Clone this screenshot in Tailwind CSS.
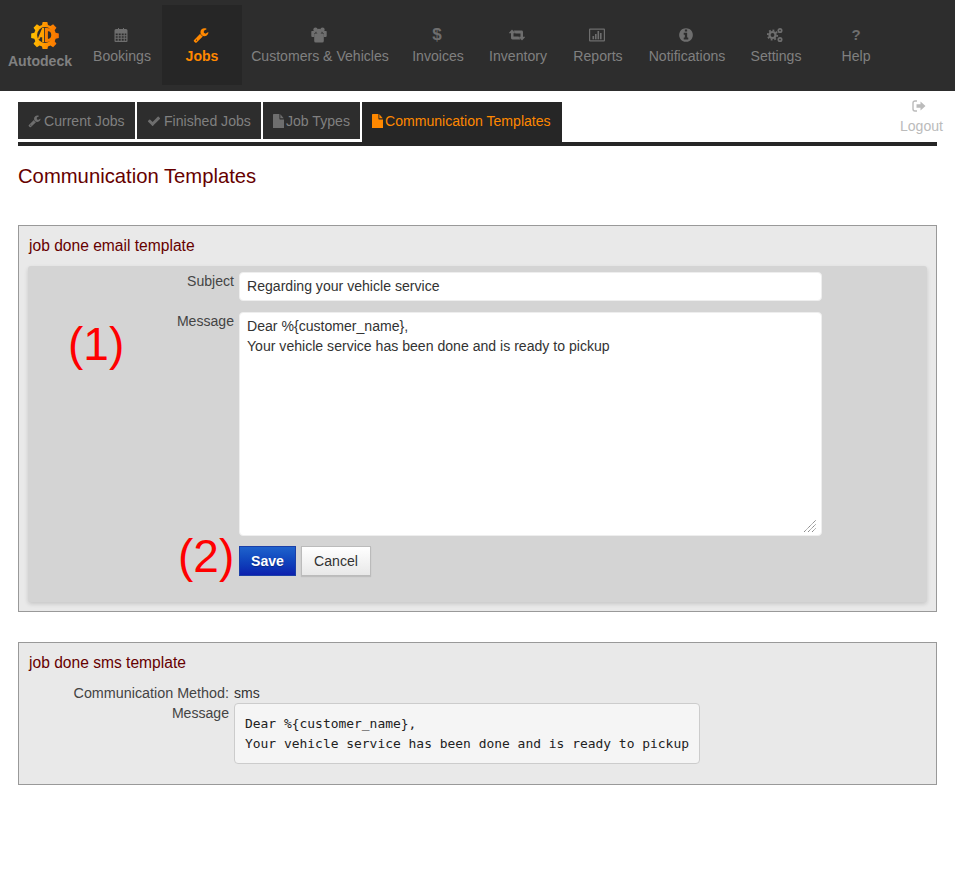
<!DOCTYPE html>
<html lang="en">
<head>
  <meta charset="UTF-8" />
  <meta name="viewport" content="width=device-width, initial-scale=1.0" />
  <title>Communication Templates - Autodeck</title>
  <script src="https://cdn.jsdelivr.net/npm/@tailwindcss/browser@4"></script>
</head>
<body class="bg-white min-h-screen font-['Liberation_Sans',Arial,sans-serif] text-[14.08px] leading-[20px] text-[#333]">

<!-- Main nav -->
<header class="h-[91px] bg-[#2d2d2d] pt-[5px] flex text-[#808080]">
  <a href="#" class="w-[80px] mr-[2px] flex flex-col items-center pt-[16px]">
    <svg width="28" height="28" viewBox="0 0 30 30" class="ml-[10px]">
      <defs>
        <linearGradient id="logoGrad" x1="0" y1="0" x2="1" y2="0">
          <stop offset="0" stop-color="#ffc400" />
          <stop offset="0.5" stop-color="#ff9500" />
          <stop offset="1" stop-color="#f97000" />
        </linearGradient>
      </defs>
      <path fill="url(#logoGrad)" d="M12.5 1h5l.7 3.4 2.6 1 2.9-1.900 3.600 3.600-1.900 2.900 1 2.600 3.400.7v5l-3.400.7-1 2.600 1.900 2.900-3.600 3.600-2.900-1.900-2.600 1-.7 3.400h-5l-.7-3.400-2.600-1-2.900 1.900-3.600-3.600 1.900-2.900-1-2.600-3.400-.7v-5l3.400-.7 1-2.600-1.900-2.900 3.600-3.600 2.900 1.900 2.600-1z" />
      <circle cx="15" cy="15" r="8.500" fill="#2d2d2d" />
      <path d="M7 19.500L12 7.500h2v15h-2v-5H10l-1 2z" fill="#ffa200" />
      <path d="M16.500 9h.8a6 6 0 0 1 0 12h-.8z" fill="#2d2d2d" stroke="#f98000" stroke-width="3.200" />
    </svg>
    <span class="mt-[2px] font-bold">Autodeck</span>
  </a>
  <nav class="flex">
    <a href="#" class="w-[80px] h-[80px] flex flex-col items-center pt-[22px]">
      <svg class="w-[16px] h-[16px] -ml-[3px]" viewBox="0 0 16 16" fill="#6e6e6e">
        <path d="M3 2h2V1h1v1h4V1h1v1h2a1.500 1.500 0 0 1 1.500 1.500V14a1 1 0 0 1-1 1h-11a1 1 0 0 1-1-1V3.500A1.500 1.500 0 0 1 3 2zm-.3 4.500v1.700h2v-1.700zm3 0v1.700h2v-1.700zm3 0v1.700h2v-1.700zm3 0v1.700h1.600v-1.700zm-9 2.700v1.600h2V9.200zm3 0v1.600h2V9.200zm3 0v1.600h2V9.200zm3 0v1.600h1.600V9.200zm-9 2.600v1.900h2v-1.900zm3 0v1.900h2v-1.900zm3 0v1.900h2v-1.900zm3 0v1.900h1.600v-1.900z" fill-rule="evenodd" />
      </svg>
      <span class="mt-[3px]">Bookings</span>
    </a>
    <a href="#" class="w-[80px] h-[80px] flex flex-col items-center pt-[22px] bg-[#262626] text-[#ff8800] font-bold">
      <svg class="w-[16px] h-[16px] -ml-[3px]" viewBox="0 0 1792 1792" fill="#ff8800">
        <path d="M448 1472q0-26-19-45t-45-19-45 19-19 45 19 45 45 19 45-19 19-45zm644-420l-682 682q-37 37-90 37-52 0-91-37l-106-108q-38-36-38-90 0-53 38-91l681-681q39 98 114.500 173.500t173.500 114.500zm634-435q0 39-23 106-47 134-164.500 217.500t-258.500 83.500q-185 0-316.500-131.500t-131.500-316.500 131.500-316.500 316.500-131.500q58 0 121.500 16.500t107.500 46.500q16 11 16 28t-16 28l-293 169v224l193 107q5-3 79-48.500t135.500-81 70.500-35.500q15 0 23.500 10t8.500 25z" />
      </svg>
      <span class="mt-[3px]">Jobs</span>
    </a>
    <a href="#" class="w-[156px] h-[80px] flex flex-col items-center pt-[22px]">
      <svg class="w-[16px] h-[16px] -ml-[3px]" viewBox="0 0 16 16" fill="#6e6e6e">
        <circle cx="4.500" cy="2.800" r="2.200" />
        <circle cx="11.500" cy="2.800" r="2.200" />
        <path d="M.8 4h3l.8 2H3.300v4H1.800A1.200 1.200 0 0 1 .3 8.800V4.500z" />
        <path d="M15.200 4h-3l-.8 2h1.300v4h1.500a1.200 1.200 0 0 0 1.500-1.200V4.500z" />
        <circle cx="8" cy="4.500" r="2.700" />
        <path d="M4 6.500h8a.8.8 0 0 1 .8.800V14a1.500 1.500 0 0 1-1.500 1.500H4.700A1.500 1.500 0 0 1 3.200 14V7.300A.8.800 0 0 1 4 6.500z" />
      </svg>
      <span class="mt-[3px]">Customers &amp; Vehicles</span>
    </a>
    <a href="#" class="w-[80px] h-[80px] flex flex-col items-center pt-[22px]">
      <span class="h-[16px] -ml-[2px] font-bold text-[17px] leading-[16px] text-[#6e6e6e]">$</span>
      <span class="mt-[3px]">Invoices</span>
    </a>
    <a href="#" class="w-[80px] h-[80px] flex flex-col items-center pt-[22px]">
      <svg class="w-[16px] h-[16px] -ml-[2px]" viewBox="0 0 16 16" fill="#6e6e6e">
        <path d="M3 2.500L6.500 6.200H4.500v3.300h5L11.500 12.500H3.400A1.400 1.400 0 0 1 2 11.100V6.200H-.5z" />
        <path d="M13 13.500L9.500 9.800h2V6.500h-5L4.500 3.500h8.100A1.400 1.400 0 0 1 14 4.900v4.900h2.500z" />
      </svg>
      <span class="mt-[3px]">Inventory</span>
    </a>
    <a href="#" class="w-[80px] h-[80px] flex flex-col items-center pt-[22px]">
      <svg class="w-[16px] h-[16px] -ml-[2px]" viewBox="0 0 16 16" fill="#6e6e6e">
        <path d="M1 1.500h14a1 1 0 0 1 1 1v11a1 1 0 0 1-1 1H1a1 1 0 0 1-1-1v-11a1 1 0 0 1 1-1zm.2 1.200v10.600h13.600V2.700z" fill-rule="evenodd" />
        <rect x="3.500" y="9" width="1.600" height="3.300" />
        <rect x="6" y="7" width="1.600" height="5.300" />
        <rect x="8.500" y="4" width="1.600" height="8.300" />
        <rect x="11" y="6" width="1.600" height="6.300" />
      </svg>
      <span class="mt-[3px]">Reports</span>
    </a>
    <a href="#" class="w-[98px] h-[80px] flex flex-col items-center pt-[22px]">
      <svg class="w-[16px] h-[16px] -ml-[3px]" viewBox="0 0 1792 1792" fill="#6e6e6e">
        <path d="M1152 1376v-160q0-14-9-23t-23-9h-96v-512q0-14-9-23t-23-9h-320q-14 0-23 9t-9 23v160q0 14 9 23t23 9h96v320h-96q-14 0-23 9t-9 23v160q0 14 9 23t23 9h448q14 0 23-9t9-23zm-128-896v-160q0-14-9-23t-23-9h-192q-14 0-23 9t-9 23v160q0 14 9 23t23 9h192q14 0 23-9t9-23zm640 416q0 209-103 385.500t-279.500 279.500-385.500 103-385.500-103-279.500-279.500-103-385.500 103-385.500 279.500-279.500 385.500-103 385.500 103 279.500 279.500 103 385.500z" />
      </svg>
      <span class="mt-[3px]">Notifications</span>
    </a>
    <a href="#" class="w-[80px] h-[80px] flex flex-col items-center pt-[22px]">
      <svg class="w-[16px] h-[16px] -ml-[2px]" viewBox="0 0 16 16" fill="none" stroke="#6e6e6e">
        <circle cx="5.500" cy="8" r="3" stroke-width="2.200" />
        <circle cx="5.500" cy="8" r="4.700" stroke-width="1.800" stroke-dasharray="1.800 1.800" />
        <circle cx="13" cy="3.500" r="1.700" stroke-width="1.700" />
        <circle cx="13" cy="12.500" r="1.700" stroke-width="1.700" />
      </svg>
      <span class="mt-[3px]">Settings</span>
    </a>
    <a href="#" class="w-[80px] h-[80px] flex flex-col items-center pt-[22px]">
      <span class="h-[16px] font-bold text-[15px] leading-[16px] text-[#6e6e6e]">?</span>
      <span class="mt-[3px]">Help</span>
    </a>
  </nav>
</header>

<main class="px-[18px]">
  <!-- Sub tabs -->
  <div class="mt-[11px] flex justify-between">
    <div class="flex items-start gap-[2px] h-[40px] text-[#808080]">
      <a href="#" class="w-[117px] h-[37px] pl-[10px] flex items-center gap-[3px] bg-[#2d2d2d]">
        <svg class="w-[13px] h-[14px]" viewBox="0 0 1792 1792" fill="#6e6e6e">
          <path d="M448 1472q0-26-19-45t-45-19-45 19-19 45 19 45 45 19 45-19 19-45zm644-420l-682 682q-37 37-90 37-52 0-91-37l-106-108q-38-36-38-90 0-53 38-91l681-681q39 98 114.500 173.500t173.500 114.500zm634-435q0 39-23 106-47 134-164.500 217.500t-258.500 83.500q-185 0-316.500-131.500t-131.500-316.500 131.500-316.500 316.500-131.500q58 0 121.500 16.500t107.500 46.500q16 11 16 28t-16 28l-293 169v224l193 107q5-3 79-48.500t135.500-81 70.500-35.500q15 0 23.500 10t8.500 25z" />
        </svg>
        Current Jobs
      </a>
      <a href="#" class="w-[124px] h-[37px] pl-[10px] flex items-center gap-[3px] bg-[#2d2d2d]">
        <svg class="w-[14px] h-[14px]" viewBox="0 0 1792 1792" fill="#6e6e6e">
          <path d="M1671 566q0 40-28 68l-724 724-136 136q-28 28-68 28t-68-28l-136-136-362-362q-28-28-28-68t28-68l136-136q28-28 68-28t68 28l294 295 656-657q28-28 68-28t68 28l136 136q28 28 28 68z" />
        </svg>
        Finished Jobs
      </a>
      <a href="#" class="w-[97px] h-[37px] pl-[10px] flex items-center gap-[2px] bg-[#2d2d2d]">
        <svg class="w-[11px] h-[14px]" viewBox="128 128 1536 1536" preserveAspectRatio="none" fill="#6e6e6e">
          <path d="M1152 512v-472q22 14 36 28l408 408q14 14 28 36h-472zm-128 32q0 40 28 68t68 28h544v1056q0 40-28 68t-68 28h-1344q-40 0-68-28t-28-68v-1600q0-40 28-68t68-28h800v544z" transform="translate(0 128) scale(1 .93)" />
        </svg>
        Job Types
      </a>
      <a href="#" class="w-[200px] h-[40px] pl-[10px] pb-[3px] flex items-center gap-[2px] bg-[#262626] text-[#ff8800]">
        <svg class="w-[11px] h-[14px]" viewBox="128 128 1536 1536" preserveAspectRatio="none" fill="#ff8800">
          <path d="M1152 512v-472q22 14 36 28l408 408q14 14 28 36h-472zm-128 32q0 40 28 68t68 28h544v1056q0 40-28 68t-68 28h-1344q-40 0-68-28t-28-68v-1600q0-40 28-68t68-28h800v544z" transform="translate(0 128) scale(1 .93)" />
        </svg>
        Communication Templates
      </a>
    </div>
    <a href="#" class="-mt-[4px] -mr-[6px] h-[44px] flex flex-col items-center text-[#bbbbbb]">
      <svg class="w-[14px] h-[14px] mt-[1px] -ml-[5px]" viewBox="0 0 14 14">
        <path d="M5 2H3a2 2 0 0 0-2 2v6a2 2 0 0 0 2 2h2" fill="none" stroke="#bbbbbb" stroke-width="1.400" />
        <path d="M4.500 5.200h4V2.500L13.500 7l-5 4.500V8.800h-4z" fill="#bbbbbb" />
      </svg>
      <span class="mt-[3px]">Logout</span>
    </a>
  </div>
  <div class="h-[4px] bg-[#262626]"></div>

  <h2 class="mt-[19px] text-[20.25px] leading-[22px] text-[#660000]">Communication Templates</h2>

  <!-- Email template -->
  <section class="mt-[38px] border border-[#999] bg-[#e9e9e9] px-[9px] pt-[9px] pb-[9px]">
    <h3 class="pl-px h-[20px] text-[15.6px] leading-[22px] text-[#660000]">job done email template</h3>
    <div class="relative mt-[11px] pt-[6px] pb-[26px] bg-[#d4d4d4] rounded-[3px] shadow-[0_2px_4px_rgba(0,0,0,0.15)]">
      <div class="flex gap-[5px]">
        <label class="w-[206px] -mt-px text-right text-[#444]">Subject</label>
        <input type="text" value="Regarding your vehicle service" class="w-[583px] h-[29px] pl-[7px] pr-[7px] pb-[2px] rounded-[4px] bg-white text-[#333] border border-[#eee] outline-none" />
      </div>
      <div class="mt-[11px] flex gap-[5px]">
        <label class="w-[206px] -mt-px text-right text-[#444]">Message</label>
        <div class="relative">
          <textarea class="block w-[583px] h-[224px] px-[7px] py-[3px] rounded-[4px] bg-white text-[#333] border border-[#eee] outline-none resize-none">Dear %{customer_name},
Your vehicle service has been done and is ready to pickup</textarea>
          <svg class="absolute right-[6px] bottom-[4px] w-[12px] h-[12px]" viewBox="0 0 12 12" stroke="#777" stroke-width="1" stroke-dasharray="1.200 0.600">
            <path d="M0 12L12 0M4 12l8-8M8 12l4-4" />
          </svg>
        </div>
      </div>
      <div class="mt-[10px] ml-[211px] flex gap-[5px]">
        <button class="w-[57px] h-[30px] bg-linear-to-b from-[#1f62cc] to-[#0e1fae] border border-[#1a3fa8] text-white font-bold [text-shadow:0_1px_1px_rgba(0,0,0,0.3)]">Save</button>
        <button class="w-[70px] h-[30px] bg-linear-to-b from-white to-[#e8e8e8] border border-[#bbb] text-[#333] shadow-[0_1px_1px_rgba(0,0,0,0.1)]">Cancel</button>
      </div>
      <span class="absolute left-[40px] top-[52px] text-[46px] leading-[52px] text-[#ff0000]">(1)</span>
      <span class="absolute left-[150px] top-[264px] text-[46px] leading-[52px] text-[#ff0000]">(2)</span>
    </div>
  </section>

  <!-- SMS template -->
  <section class="mt-[30px] border border-[#999] bg-[#e9e9e9] pt-[9px] pb-[20px]">
    <h3 class="pl-[10px] h-[20px] text-[15.6px] leading-[22px] text-[#660000]">job done sms template</h3>
    <div class="mt-[11px] flex gap-[5px]">
      <span class="w-[210px] text-right text-[14.35px] text-[#444]">Communication Method:</span>
      <span class="text-[#333]">sms</span>
    </div>
    <div class="flex gap-[5px]">
      <span class="w-[210px] text-right text-[#444]">Message</span>
      <pre class="w-[466px] h-[61px] px-[10px] pt-[10px] bg-[#f5f5f5] border border-[#ccc] rounded-[4px] font-['DejaVu_Sans_Mono',monospace] text-[12.94px] leading-[20px] text-[#222]">Dear %{customer_name},
Your vehicle service has been done and is ready to pickup</pre>
    </div>
  </section>
</main>

</body>
</html>
